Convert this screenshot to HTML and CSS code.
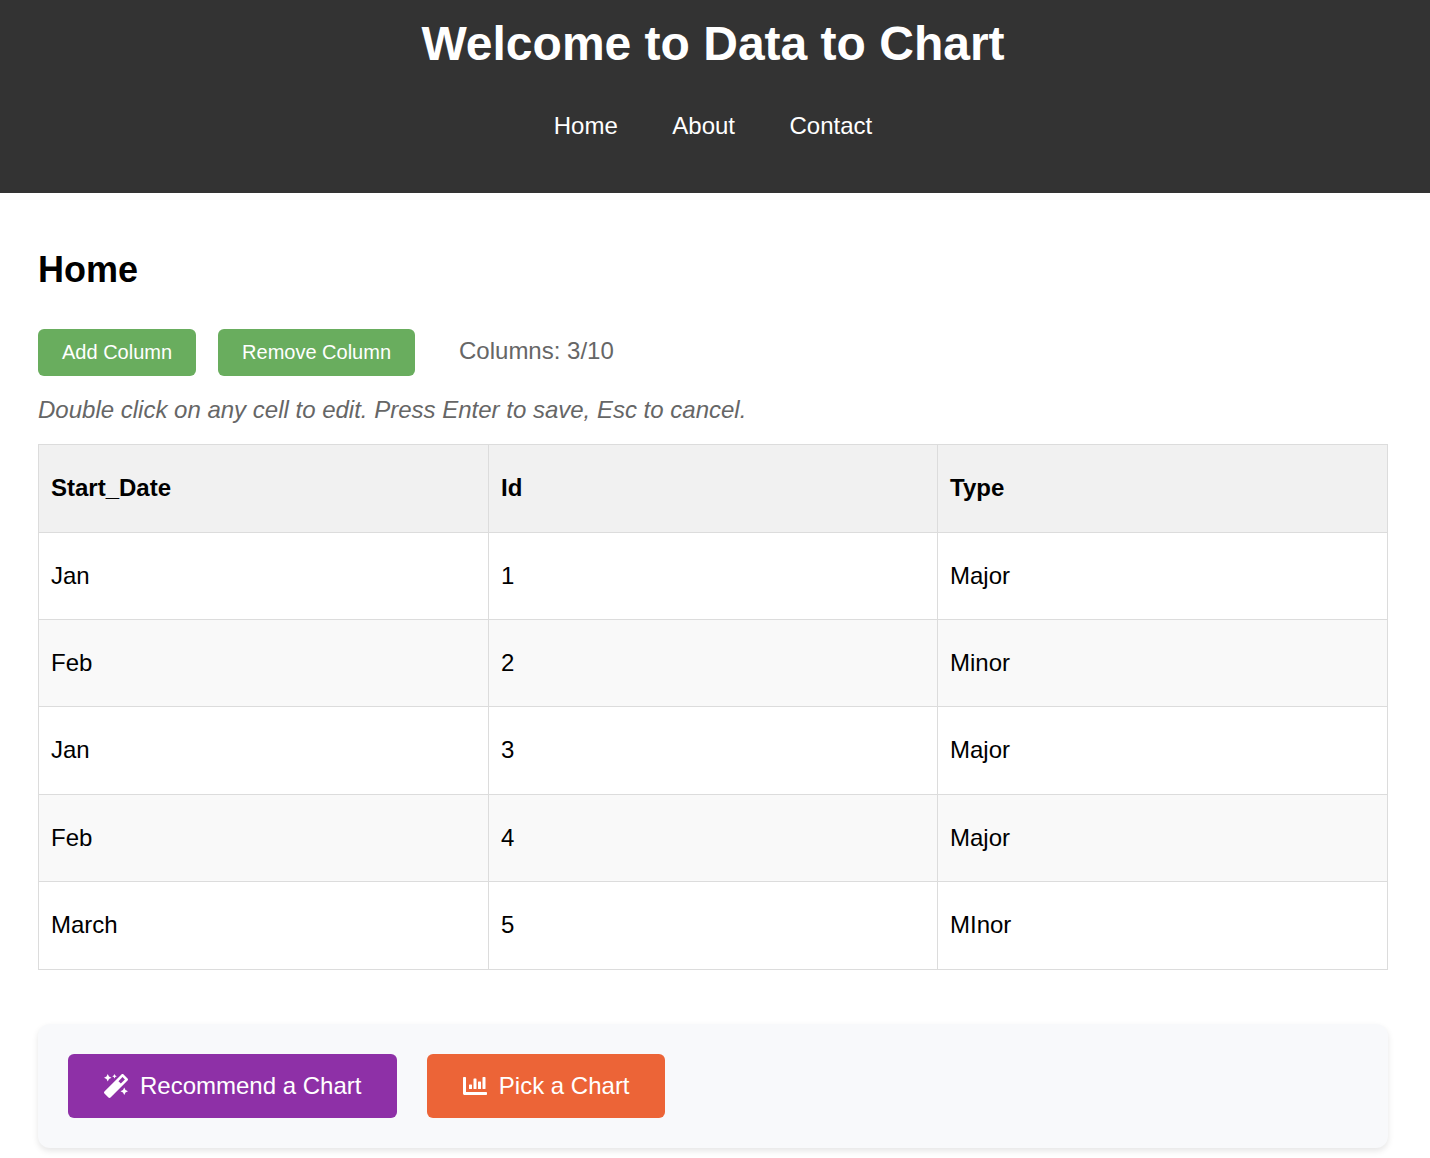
FILE: index.html
```html
<!DOCTYPE html>
<html lang="en">
<head>
<meta charset="utf-8">
<title>Data to Chart</title>
<link rel="stylesheet" href="styles.css">
</head>
<body>
<header class="site-header">
  <h1>Welcome to Data to Chart</h1>
  <nav class="site-nav">
    <a href="#">Home</a>
    <a href="#">About</a>
    <a href="#">Contact</a>
  </nav>
</header>
<main class="content">
  <h2>Home</h2>
  <div class="toolbar">
    <button class="column-btn" type="button">Add Column</button>
    <button class="column-btn" type="button">Remove Column</button>
    <span class="column-count">Columns: 3/10</span>
  </div>
  <p class="hint">Double click on any cell to edit. Press Enter to save, Esc to cancel.</p>
  <table class="data-table">
    <colgroup><col class="col-outer"><col class="col-middle"><col class="col-outer"></colgroup>
    <thead>
      <tr><th>Start_Date</th><th>Id</th><th>Type</th></tr>
    </thead>
    <tbody>
      <tr><td>Jan</td><td>1</td><td>Major</td></tr>
      <tr><td>Feb</td><td>2</td><td>Minor</td></tr>
      <tr class="tall"><td>Jan</td><td>3</td><td>Major</td></tr>
      <tr><td>Feb</td><td>4</td><td>Major</td></tr>
      <tr class="tall"><td>March</td><td>5</td><td>MInor</td></tr>
    </tbody>
  </table>
  <section class="chart-actions">
    <button class="action recommend" type="button">
      <svg class="icon" viewBox="0 0 512 512" aria-hidden="true"><path d="M224 96l16-32 32-16-32-16-16-32-16 32-32 16 32 16 16 32zM80 160l26.66-53.33L160 80l-53.34-26.67L80 0 53.34 53.33 0 80l53.34 26.67L80 160zm352 128l-26.66 53.33L352 368l53.34 26.67L432 448l26.66-53.33L512 368l-53.34-26.67L432 288zm70.62-193.77L417.77 9.38C411.53 3.12 403.34 0 395.15 0c-8.19 0-16.38 3.13-22.63 9.38L9.38 372.52c-12.5 12.5-12.5 32.76 0 45.25l84.85 84.85c6.25 6.25 14.44 9.37 22.62 9.37 8.19 0 16.38-3.12 22.63-9.37l363.14-363.15c12.5-12.48 12.5-32.75 0-45.24zM359.45 203.46l-50.91-50.91 86.6-86.6 50.91 50.91-86.6 86.6z"/></svg>
      <span>Recommend a Chart</span>
    </button>
    <button class="action pick" type="button">
      <svg class="icon" viewBox="0 0 512 512" aria-hidden="true"><path d="M332.8 320h38.4c6.4 0 12.8-6.4 12.8-12.8V172.8c0-6.4-6.4-12.8-12.8-12.8h-38.4c-6.4 0-12.8 6.4-12.8 12.8v134.4c0 6.4 6.4 12.8 12.8 12.8zm96 0h38.4c6.4 0 12.8-6.4 12.8-12.8V76.8c0-6.4-6.4-12.8-12.8-12.8h-38.4c-6.4 0-12.8 6.4-12.8 12.8v230.4c0 6.4 6.4 12.8 12.8 12.8zm-288 0h38.4c6.4 0 12.8-6.4 12.8-12.8v-70.4c0-6.4-6.4-12.8-12.8-12.8h-38.4c-6.4 0-12.8 6.4-12.8 12.8v70.4c0 6.4 6.4 12.8 12.8 12.8zm96 0h38.4c6.4 0 12.8-6.4 12.8-12.8V108.8c0-6.4-6.4-12.8-12.8-12.8h-38.4c-6.4 0-12.8 6.4-12.8 12.8v198.4c0 6.4 6.4 12.8 12.8 12.8zM496 384H64V80c0-8.84-7.16-16-16-16H16C7.16 64 0 71.16 0 80v336c0 17.67 14.33 32 32 32h464c8.84 0 16-7.16 16-16v-32c0-8.84-7.16-16-16-16z"/></svg>
      <span>Pick a Chart</span>
    </button>
  </section>
</main>
</body>
</html>
```
FILE: styles.css
```css
* {
  box-sizing: border-box;
}

body {
  margin: 0;
  background: #fff;
  color: #000;
  font: 24px/28px "Liberation Sans", Arial, sans-serif;
}

button {
  border: 0;
  font-family: inherit;
  color: #fff;
  white-space: nowrap;
}

.site-header {
  height: 193px;
  padding: 16px 4px 0 0;
  background: #333;
  color: #fff;
  text-align: center;
}

h1 {
  margin: 0 0 40px;
  font-size: 48px;
  line-height: 56px;
}

.site-nav {
  display: flex;
  justify-content: center;
  gap: 54.5px;
}

.site-nav a {
  color: inherit;
  text-decoration: none;
}

.content {
  padding: 56px 42px 10px 38px;
}

h2 {
  margin: 0 0 38px;
  font-size: 36px;
  line-height: 42px;
}

.toolbar {
  display: flex;
  gap: 22px;
  height: 47px;
}

.column-btn {
  height: 47px;
  padding: 0 24px;
  border-radius: 6px;
  background: #69ad5e;
  font-size: 20px;
}

.column-count {
  padding-top: 8px;
  margin-left: 22px;
  color: #666;
}

.hint {
  margin: 20px 0;
  color: #666;
  font-style: italic;
}

.data-table {
  width: 1350px;
  table-layout: fixed;
  border-spacing: 1px;
  background: #dcdcdc;
}

.col-outer {
  width: 449px;
}

.col-middle {
  width: 448px;
}

.data-table th,
.data-table td {
  height: 86px;
  padding: 0 12px;
  background: #fff;
  text-align: left;
}

.data-table th {
  height: 87px;
  padding-bottom: 1px;
  background: #f1f1f1;
}

.data-table tr.tall td {
  height: 87px;
  padding-bottom: 1px;
}

.data-table tbody tr:nth-child(even) td {
  background: #f9f9f9;
}

.chart-actions {
  display: flex;
  gap: 30px;
  height: 124px;
  margin-top: 54px;
  padding: 30px;
  border-radius: 12px;
  background: #f8f9fb;
  box-shadow: 0 3px 6px rgba(0, 0, 0, 0.1);
}

.action {
  display: flex;
  align-items: center;
  gap: 12px;
  height: 64px;
  padding: 0 36px;
  border-radius: 6px;
  font-size: 24px;
}

.recommend {
  background: #8e30a7;
}

.pick {
  padding: 0 35.4px;
  background: #ec6437;
}

.icon {
  width: 24px;
  height: 24px;
  fill: currentColor;
}
```
